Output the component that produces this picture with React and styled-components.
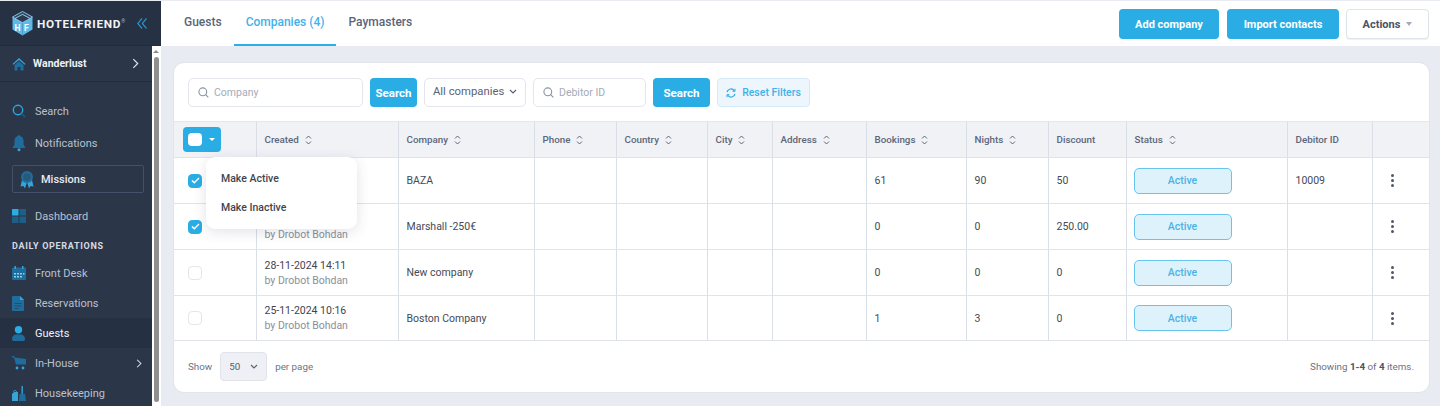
import React from "react";
import styled, { createGlobalStyle } from "styled-components";

const Global = createGlobalStyle`
  html, body { margin: 0; padding: 0; height: 406px; overflow: hidden; background: #e8ebf1; }
  body { font-family: Roboto, "Liberation Sans", sans-serif; color: #3f4450; }
  * { box-sizing: border-box; }
`;

const Page = styled.div`
  display: flex; width: 1440px; height: 406px; overflow: hidden; padding-top: 1px; background: #e8ebf1;
`;
const Sidebar = styled.aside`
  width: 161px; flex: none; display: flex; flex-direction: column; background: #2c3649; height: 405px; overflow: hidden;
`;
const Brand = styled.div`
  height: 45px; flex: none; display: flex; align-items: center; padding: 0 0 0 12px; background: #273144; box-shadow: inset 0 -1px 0 #232c3d;
`;
const BrandName = styled.span`
  font-size: 11.8px; font-weight: 700; letter-spacing: .7px; color: #f1f3f6; margin-left: 4px; white-space: nowrap;
  sup { font-size: 5px; color: #aeb6c2; font-weight: 400; letter-spacing: 0; vertical-align: 5px; line-height: 0; }
`;
const Collapse = styled.span`
  margin-left: 12px; display: flex;
`;
const SideBody = styled.div`
  flex: 1; display: flex; min-height: 0;
`;
const Nav = styled.nav`
  width: 152px; flex: none; display: flex; flex-direction: column;
`;
const Hotel = styled.div`
  height: 36px; flex: none; display: flex; align-items: center; padding: 0 13px 0 12px; border-bottom: 1px solid #232c3d; background: #2c3649;
  span { font-size: 10.5px; font-weight: 700; color: #eef1f4; margin-left: 7px; flex: 1; }
`;
const NavList = styled.div`
  padding-top: 13px; display: flex; flex-direction: column;
`;
const NavItem = styled.div`
  height: ${p => p.$h ?? 30}px; flex: none; display: flex; align-items: center; padding-left: 12px;
  color: ${p => (p.$active ? "#f1f3f6" : "#b9c1cd")};
  background: ${p => (p.$active ? "#263043" : "transparent")};
  font-size: 11px; font-weight: 400; position: relative;
  span { margin-left: ${p => p.$gap ?? 10}px; flex: 1; }
`;
const Chev = styled.em`
  display: flex; margin-right: 10px;
`;
const Mission = styled.div`
  margin: 6px 8px 8px 12px; height: 28px; flex: none; display: flex; align-items: center; padding-left: 7px;
  border: 1px solid #43516a; border-radius: 2px; color: #e8ebef; font-size: 11px; font-weight: 500;
  span { margin-left: 7px; }
`;
const NavSection = styled.div`
  font-size: 9px; font-weight: 700; letter-spacing: .7px; color: #d5dae2; padding: 10px 0 0 12px; height: 27px; flex: none;
`;
const Scrollbar = styled.div`
  width: 9px; flex: none; background: #fff; display: flex; flex-direction: column; align-items: center; padding-top: 4px; padding-right: 1px;
  i { width: 0; height: 0; border: 3px solid transparent; border-top: 0; border-bottom: 3px solid #8a8a8a; }
  b { width: 5px; flex: 1; background: #8f8f8f; border-radius: 3px; margin: 4px 0 4px; }
`;
const Main = styled.main`
  flex: 1; min-width: 0; display: flex; flex-direction: column;
`;
const Topbar = styled.header`
  height: 45px; flex: none; display: flex; align-items: stretch; justify-content: space-between; background: #fff; padding-right: 11px;
`;
const Tabs = styled.div`
  display: flex; padding-left: 11px;
`;
const Tab = styled.div`
  padding: 0 12px 2px; height: 45px; display: flex; align-items: center; font-size: 12px; font-weight: 500;
  color: ${p => (p.$active ? "#3fb2e9" : "#5a6478")};
  border-bottom: 2px solid ${p => (p.$active ? "#29b0e6" : "transparent")};
`;
const TopActions = styled.div`
  display: flex; gap: 8px; align-items: center; margin-top: 1px;
`;
const PrimaryTop = styled.button`
  height: 30px; width: ${p => p.$w}px; padding: 0; border: 0; border-radius: 4px; background: #29ade4; color: #fff; font: 700 11px Roboto, sans-serif;
`;
const ActionsBtn = styled.button`
  height: 30px; width: 83px; margin-left: -1px; border: 1px solid #dfe3ea; border-radius: 4px; background: #fff; color: #4b5365; font: 700 11px Roboto, sans-serif;
  display: flex; align-items: center; justify-content: center; gap: 6px; box-shadow: 0 1px 1px rgba(40,50,70,.08);
  i { width: 0; height: 0; border: 3.5px solid transparent; border-bottom: 0; border-top: 4px solid #a4abb7; }
`;
const Content = styled.div`
  padding: 16px 11px 13px 12px; flex: 1; min-height: 0; display: flex;
`;
const Card = styled.section`
  flex: 1; background: #fff; border: 1px solid #e0e4eb; border-radius: 11px; position: relative; display: flex; flex-direction: column; height: 331px;
`;
const Filters = styled.div`
  height: 58px; flex: none; display: flex; align-items: flex-start; padding: 15px 0 0 14px; gap: 7px;
`;
const InputBox = styled.div`
  width: ${p => p.$w}px; height: 29px; border: 1px solid #e3e6ec; border-radius: 5px; display: flex; align-items: center; padding-left: 9px;
  font-size: 10.5px; color: #a5acb8; gap: 5px; background: #fff;
`;
const SearchBtn = styled.button`
  width: ${p => p.$w}px; height: 29px; border: 0; border-radius: 4px; background: #29ade4; color: #fff; font: 700 11.5px Roboto, sans-serif; padding: 0;
`;
const Select = styled.div`
  width: 102px; height: 29px; border: 1px solid #e3e6ec; border-radius: 5px; display: flex; align-items: center; justify-content: space-between; padding: 0 8px 2px 8px;
  font-size: 11.3px; color: #5b6373; white-space: nowrap;
`;
const Reset = styled.button`
  width: 93px; height: 29px; border: 1px solid #d5e9f8; border-radius: 4px; background: #edf6fd; color: #3fb2e9; font: 500 10.5px Roboto, sans-serif;
  display: flex; align-items: center; justify-content: center; gap: 6px; padding: 0;
`;
const Table = styled.table`
  width: 1255px; border-collapse: collapse; table-layout: fixed; flex: none;
`;
const Th = styled.th`
  height: 36px; padding: 0 0 0 8px; text-align: left; background: #f0f2f6; border-top: 1px solid #e4e7ed; border-bottom: 1px solid #e0e4ea; border-left: 1px solid #dadee6;
  font-size: 9.8px; font-weight: 500; color: #5d667a; white-space: nowrap;
  &:first-child { border-left: 0; padding-left: 9px; }
  svg { margin-left: 6px; vertical-align: -2px; }
`;
const Td = styled.td`
  height: ${p => p.$h ?? 46}px; padding: 0 0 0 8px; border-bottom: 1px solid #e0e4ea; border-left: 1px solid #dadee6; font-size: 10.5px; color: #444a56;
  &:first-child { border-left: 0; padding-left: 14px; }
  vertical-align: middle;
`;
const Created = styled.div`
  line-height: 15px; font-size: 10.5px; color: #3f4450;
  small { display: block; font-size: 10.5px; color: #8a909b; }
`;
const HeadCheck = styled.div`
  width: 38px; height: 25px; background: #29ade4; border-radius: 4px; display: flex; align-items: center; padding-left: 5px; gap: 7px;
  b { width: 14px; height: 13px; background: #fff; border-radius: 4px; }
  i { width: 0; height: 0; border: 3px solid transparent; border-bottom: 0; border-top: 3px solid #fff; }
`;
const Check = styled.div`
  width: 14px; height: 14px; border-radius: 4px; display: flex; align-items: center; justify-content: center;
  background: ${p => (p.$on ? "#29ade4" : "#fff")}; border: 1px solid ${p => (p.$on ? "#29ade4" : "#e3e6ec")};
`;
const Status = styled.div`
  width: 98px; height: 26px; margin-left: -1px; border: 1px solid #68c4ef; border-radius: 5px; background: #def2fb; color: #4ab3e6; display: flex; align-items: center; justify-content: center; font-size: 10.5px; font-weight: 500;
`;
const Dots = styled.div`
  width: 3px; margin-left: 10px; display: flex; flex-direction: column; gap: 2px;
  i { width: 3px; height: 3px; border-radius: 50%; background: #4f5768; }
`;
const Footer = styled.div`
  flex: 1; display: flex; align-items: center; justify-content: space-between; padding: 0 15px 1px 14px; font-size: 9.8px; color: #6c7484;
  b { color: #4b5262; font-weight: 700; }
`;
const PerPage = styled.div`
  display: flex; align-items: center; gap: 8px;
`;
const PageSelect = styled.div`
  width: 47px; height: 29px; background: #eef0f5; border: 1px solid #e0e3ea; border-radius: 4px; display: flex; align-items: center; justify-content: space-between; padding: 0 8px; color: #565e6e;
`;
const Menu = styled.div`
  position: absolute; left: 32px; top: 94px; width: 151px; height: 72px; background: #fff; border-radius: 9px; box-shadow: 0 3px 14px rgba(50,60,90,.14);
  display: flex; flex-direction: column; justify-content: center; gap: 13px; padding-left: 15px; font-size: 10.5px; font-weight: 500; color: #3f4450; z-index: 2; line-height: 16px;
`;

const Sort = () => (
  <svg width="7" height="10" viewBox="0 0 7 10" fill="none" stroke="#5d667a" strokeWidth="1"><path d="M1 3.500 3.500 1 6 3.500M1 6.500 3.500 9 6 6.500" /></svg>
);
const Glass = ({ c = "#8b93a1" }) => (
  <svg width="11" height="11" viewBox="0 0 11 11" fill="none" stroke={c} strokeWidth="1.100"><circle cx="4.800" cy="4.800" r="3.900" /><path d="m7.700 7.700 2.600 2.600" /></svg>
);
const Chevron = ({ c = "#5b6373" }) => (
  <svg width="8" height="5" viewBox="0 0 8 5" fill="none" stroke={c} strokeWidth="1.200"><path d="M1 1l3 3 3-3" /></svg>
);
const Right = ({ w = 7, h = 11 }) => (
  <svg width={w} height={h} viewBox="0 0 8 12" fill="none" stroke="#dfe3e8" strokeWidth="1.400"><path d="M1.500 1l5 5-5 5" /></svg>
);
const Logo = () => (
  <svg width="21" height="25" viewBox="0 0 21 25">
    <path d="M10.500 0.500 20.500 6v12.500L10.500 24.500 .5 18.500V6z" fill="#5cb9e8" />
    <path d="M10.500 12v12.500" stroke="#3f93c4" strokeWidth=".7" />
    <path d="M10.500 0.500 20.500 6l-2.500 1.500-7.500-4-7.500 4L.5 6z" fill="#2c4a66" stroke="#9fd4ef" strokeWidth=".8" />
    <path d="M3 7.500 10.500 3.500l7.500 4-7.500 4z" fill="#2b3a50" stroke="#9fd4ef" strokeWidth=".7" />
    <text x="2.500" y="20" fontFamily="Roboto" fontSize="8.500" fontWeight="700" fill="#fff">H</text>
    <text x="12" y="20" fontFamily="Roboto" fontSize="8.500" fontWeight="700" fill="#fff">F</text>
  </svg>
);
const IconHome = () => (
  <svg width="14" height="14" viewBox="0 0 14 14"><path d="M7 1 .5 7l.8.8L7 3l5.700 4.800.8-.8z" fill="#35a4da" /><path d="M2.500 8 7 4.300 11.500 8v5.500h-3V10h-3v3.500h-3z" fill="#1f6d9c" /></svg>
);
const IconSearch = () => (
  <svg width="14" height="14" viewBox="0 0 14 14" fill="none"><circle cx="6" cy="6" r="4.700" stroke="#2ba9df" strokeWidth="1.400" /><path d="m9.500 9.500 3.500 3.500" stroke="#1f5f86" strokeWidth="1.200" /></svg>
);
const IconBell = () => (
  <svg width="14" height="18" viewBox="0 0 14 18"><path d="M7 1c.7 0 1 .5 1 1 2.500.6 3.500 2.500 3.500 5v3.500L13.500 14H.5l2-3.500V7c0-2.500 1-4.400 3.500-5 0-.5.300-1 1-1z" fill="#1f6d9c" /><circle cx="7" cy="15.800" r="1.500" fill="#35a4da" /></svg>
);
const IconMedal = () => (
  <svg width="14" height="19" viewBox="0 0 14 19"><path d="M2 10 .5 16.500 3.500 16 5 18.500 7 12l2 6.500 1.500-2.500 3 .5L12 10z" fill="#35a4da" /><circle cx="7" cy="7" r="6" fill="#1f6d9c" /><circle cx="7" cy="7" r="3.800" fill="#2a5878" /></svg>
);
const IconDash = () => (
  <svg width="14" height="14" viewBox="0 0 14 14"><rect width="6.500" height="6.500" rx=".5" fill="#29ade4" /><rect x="7.500" width="6.500" height="6.500" rx=".5" fill="#1f5f86" /><rect y="7.500" width="6.500" height="6.500" rx=".5" fill="#1f5f86" /><rect x="7.500" y="7.500" width="6.500" height="6.500" rx=".5" fill="#1f5f86" /></svg>
);
const IconCal = () => (
  <svg width="14" height="14" viewBox="0 0 14 14"><rect y="1.500" width="14" height="12.500" rx="1" fill="#1f6d9c" /><rect x="2.500" y="0" width="1.500" height="3" fill="#35a4da" /><rect x="10" y="0" width="1.500" height="3" fill="#35a4da" /><path d="M2 7h2v1.500H2zM5 7h2v1.500H5zM8 7h2v1.500H8zM11 7h1.500v1.500H11zM2 10h2v1.500H2zM5 10h2v1.500H5zM8 10h2v1.500H8z" fill="#8fd0f0" /></svg>
);
const IconDoc = () => (
  <svg width="12" height="15" viewBox="0 0 12 15"><path d="M0 1a1 1 0 0 1 1-1h7l4 4v10a1 1 0 0 1-1 1H1a1 1 0 0 1-1-1z" fill="#1f6d9c" /><path d="M8 0l4 4H8z" fill="#35a4da" /><path d="M2.500 7h7v1h-7zM2.500 9.500h7v1h-7zM2.500 12h4v1h-4z" fill="#2c4a66" /></svg>
);
const IconUser = () => (
  <svg width="13" height="15" viewBox="0 0 13 15"><circle cx="6.500" cy="3.700" r="3.700" fill="#29ade4" /><path d="M0 13c0-3 2-4.500 4-4.500h5c2 0 4 1.500 4 4.500 0 1.400-.8 2-2 2H2c-1.200 0-2-.6-2-2z" fill="#1f6d9c" /></svg>
);
const IconCart = () => (
  <svg width="14" height="14" viewBox="0 0 14 14"><path d="M0 0h2l1 1.500L14 3v5.500H4L2 1.500H0z" fill="#1f6d9c" /><circle cx="5" cy="12" r="1.400" fill="#35a4da" /><circle cx="11" cy="12" r="1.400" fill="#35a4da" /></svg>
);
const IconBroom = () => (
  <svg width="14" height="15" viewBox="0 0 14 15"><rect x="9.500" y="0" width="1.400" height="8" fill="#35a4da" /><path d="M7.500 8h5.500l1 7H7z" fill="#1f6d9c" /><path d="M0 8l2-2h4v9H0z" fill="#35a4da" /><path d="M1.500 6c0-2 3-2 3 0" fill="none" stroke="#35a4da" /></svg>
);
const Tick = () => (
  <svg width="9" height="7" viewBox="0 0 9 7" fill="none" stroke="#fff" strokeWidth="1.500"><path d="M1 3.500 3.300 5.800 8 1" /></svg>
);

const cols = [82, 142, 136, 82, 91, 65, 94, 100, 82, 78, 161, 85, 57];
const heads = [
  ["Created", true], ["Company", true], ["Phone", true], ["Country", true], ["City", true], ["Address", true],
  ["Bookings", true], ["Nights", true], ["Discount", false], ["Status", true], ["Debitor ID", false], ["", false],
];
const rows = [
  { on: true, date: "\u00a0", by: "\u00a0", company: "BAZA", bookings: "61", nights: "90", discount: "50", debtor: "10009" },
  { on: true, date: "\u00a0", by: "by Drobot Bohdan", company: "Marshall -250€", bookings: "0", nights: "0", discount: "250.00", debtor: "" },
  { on: false, date: "28-11-2024 14:11", by: "by Drobot Bohdan", company: "New company", bookings: "0", nights: "0", discount: "0", debtor: "" },
  { on: false, date: "25-11-2024 10:16", by: "by Drobot Bohdan", company: "Boston Company", bookings: "1", nights: "3", discount: "0", debtor: "", h: 45 },
];

export default function App() {
  return (
    <Page>
      <Global />
      <Sidebar>
        <Brand>
          <Logo />
          <BrandName>HOTELFRIEND<sup>®</sup></BrandName>
          <Collapse>
            <svg width="10" height="11" viewBox="0 0 10 11" fill="none" stroke="#2b8fc4" strokeWidth="1.200"><path d="M5 .5 0.800 5.500 5 10.500M9.500 .5 5.300 5.500 9.500 10.500" /></svg>
          </Collapse>
        </Brand>
        <SideBody>
          <Nav>
            <Hotel><IconHome /><span>Wanderlust</span><Right /></Hotel>
            <NavList>
              <NavItem $gap={9} $h={32}><IconSearch /><span>Search</span></NavItem>
              <NavItem $gap={9} $h={32}><IconBell /><span>Notifications</span></NavItem>
              <Mission><IconMedal /><span>Missions</span></Mission>
              <NavItem $gap={9}><IconDash /><span>Dashboard</span></NavItem>
              <NavSection>DAILY OPERATIONS</NavSection>
              <NavItem $gap={9}><IconCal /><span>Front Desk</span></NavItem>
              <NavItem $gap={11}><IconDoc /><span>Reservations</span></NavItem>
              <NavItem $gap={10} $active><IconUser /><span>Guests</span></NavItem>
              <NavItem $gap={9}><IconCart /><span>In-House</span><Chev><Right w={6} h={9} /></Chev></NavItem>
              <NavItem $gap={9}><IconBroom /><span>Housekeeping</span></NavItem>
            </NavList>
          </Nav>
          <Scrollbar><i /><b /></Scrollbar>
        </SideBody>
      </Sidebar>
      <Main>
        <Topbar>
          <Tabs>
            <Tab>Guests</Tab>
            <Tab $active>Companies (4)</Tab>
            <Tab>Paymasters</Tab>
          </Tabs>
          <TopActions>
            <PrimaryTop $w={100}>Add company</PrimaryTop>
            <PrimaryTop $w={112}>Import contacts</PrimaryTop>
            <ActionsBtn>Actions<i /></ActionsBtn>
          </TopActions>
        </Topbar>
        <Content>
          <Card>
            <Filters>
              <InputBox $w={175}><Glass />Company</InputBox>
              <SearchBtn $w={47}>Search</SearchBtn>
              <Select>All companies<Chevron /></Select>
              <InputBox $w={113}><Glass />Debitor ID</InputBox>
              <SearchBtn $w={57}>Search</SearchBtn>
              <Reset>
                <svg width="10" height="10" viewBox="0 0 10 10" fill="none" stroke="#2ba9df" strokeWidth="1.200"><path d="M1 4.200A4 4 0 0 1 8.300 2.800M9 5.800A4 4 0 0 1 1.700 7.200" /><path d="M9 .8v2.500H6.500M1 9.200V6.700h2.500" strokeWidth="1" /></svg>
                Reset Filters
              </Reset>
            </Filters>
            <Table>
              <colgroup>{cols.map((w, i) => <col key={i} style={{ width: w }} />)}</colgroup>
              <thead>
                <tr>
                  <Th><HeadCheck><b /><i /></HeadCheck></Th>
                  {heads.map(([t, s], i) => <Th key={i}>{t}{s && <Sort />}</Th>)}
                </tr>
              </thead>
              <tbody>
                {rows.map((r, i) => (
                  <tr key={i}>
                    <Td $h={r.h}><Check $on={r.on}>{r.on && <Tick />}</Check></Td>
                    <Td $h={r.h}>
                      <Created>{r.date}<small>{r.by}</small></Created>
                    </Td>
                    <Td $h={r.h}>{r.company}</Td>
                    <Td $h={r.h} /><Td $h={r.h} /><Td $h={r.h} /><Td $h={r.h} />
                    <Td $h={r.h}>{r.bookings}</Td>
                    <Td $h={r.h}>{r.nights}</Td>
                    <Td $h={r.h}>{r.discount}</Td>
                    <Td $h={r.h}><Status>Active</Status></Td>
                    <Td $h={r.h}>{r.debtor}</Td>
                    <Td $h={r.h}><Dots><i /><i /><i /></Dots></Td>
                  </tr>
                ))}
              </tbody>
            </Table>
            <Footer>
              <PerPage>Show<PageSelect>50<Chevron /></PageSelect>per page</PerPage>
              <div>Showing <b>1-4</b> of <b>4</b> items.</div>
            </Footer>
            <Menu><div>Make Active</div><div>Make Inactive</div></Menu>
          </Card>
        </Content>
      </Main>
    </Page>
  );
}
